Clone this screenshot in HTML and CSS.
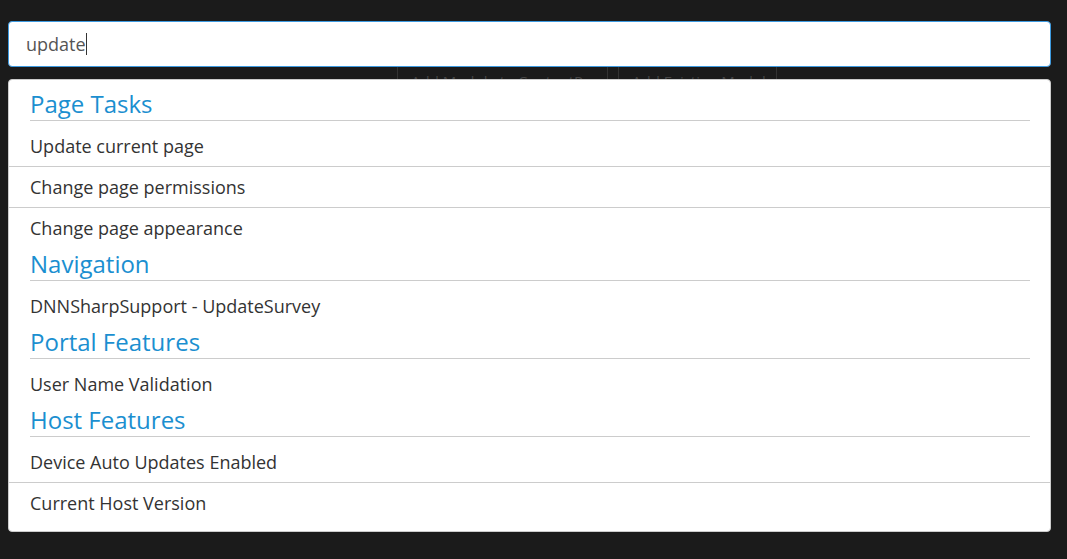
FILE: index.html
```html
<!DOCTYPE html>
<html lang="en">
<head>
<meta charset="utf-8">
<title>Search</title>
<link rel="stylesheet" href="styles.css">
</head>
<body>
<div class="page">
  <div class="toolbar">
    <div class="tool-btn tool-btn-wide">Add Module to ContentPane</div>
    <div class="tool-btn tool-btn-narrow">Add Existing Module</div>
  </div>

  <div class="search">
    <div class="search-input"><span class="typed">update</span><span class="caret"></span></div>
    <div class="dropdown">
      <div class="group-title">Page Tasks</div>
      <div class="item">Update current page</div>
      <div class="item">Change page permissions</div>
      <div class="item item-last">Change page appearance</div>

      <div class="group-title">Navigation</div>
      <div class="item item-last">DNNSharpSupport - UpdateSurvey</div>

      <div class="group-title">Portal Features</div>
      <div class="item item-last">User Name Validation</div>

      <div class="group-title">Host Features</div>
      <div class="item">Device Auto Updates Enabled</div>
      <div class="item item-last">Current Host Version</div>
    </div>
  </div>
</div>
</body>
</html>
```

FILE: styles.css
```css
html, body {
  margin: 0;
  padding: 0;
  background: #1b1b1b;
}

body {
  font-family: "Open Sans", "Liberation Sans", sans-serif;
}

.page {
  position: relative;
  width: 1067px;
  height: 559px;
  overflow: hidden;
}

.toolbar {
  display: flex;
  gap: 10px;
  padding-top: 60px;
  margin-left: 397px;
}

.tool-btn {
  box-sizing: border-box;
  height: 40px;
  line-height: 42px;
  padding: 0 13px;
  border-left: 1px solid #333;
  border-right: 1px solid #333;
  color: #454545;
  font-size: 15px;
  white-space: nowrap;
}

.tool-btn-wide {
  width: 211px;
}

.tool-btn-narrow {
  width: 159px;
}

.search {
  position: absolute;
  left: 8px;
  top: 21px;
  width: 1043px;
}

.search-input {
  box-sizing: border-box;
  height: 46px;
  background: #ffffff;
  border: 1px solid #3d9ae0;
  border-radius: 4px;
  padding-left: 17px;
  display: flex;
  align-items: center;
  font-size: 18px;
  color: #555555;
}

.caret {
  display: inline-block;
  width: 1px;
  height: 22px;
  background: #333333;
  margin-left: 0;
}

.dropdown {
  margin-top: 12px;
  background: #ffffff;
  border: 1px solid #cccccc;
  border-radius: 4px;
  padding: 8px 0 8px;
}

.group-title {
  margin: 0 20px 5px 21px;
  height: 32px;
  line-height: 32px;
  font-size: 24px;
  color: #1b8fd0;
  border-bottom: 1px solid #cccccc;
}

.item {
  height: 40px;
  line-height: 40px;
  padding-left: 21px;
  font-size: 18px;
  color: #333333;
  border-bottom: 1px solid #cccccc;
}

.item-last {
  border-bottom: none;
}
```
